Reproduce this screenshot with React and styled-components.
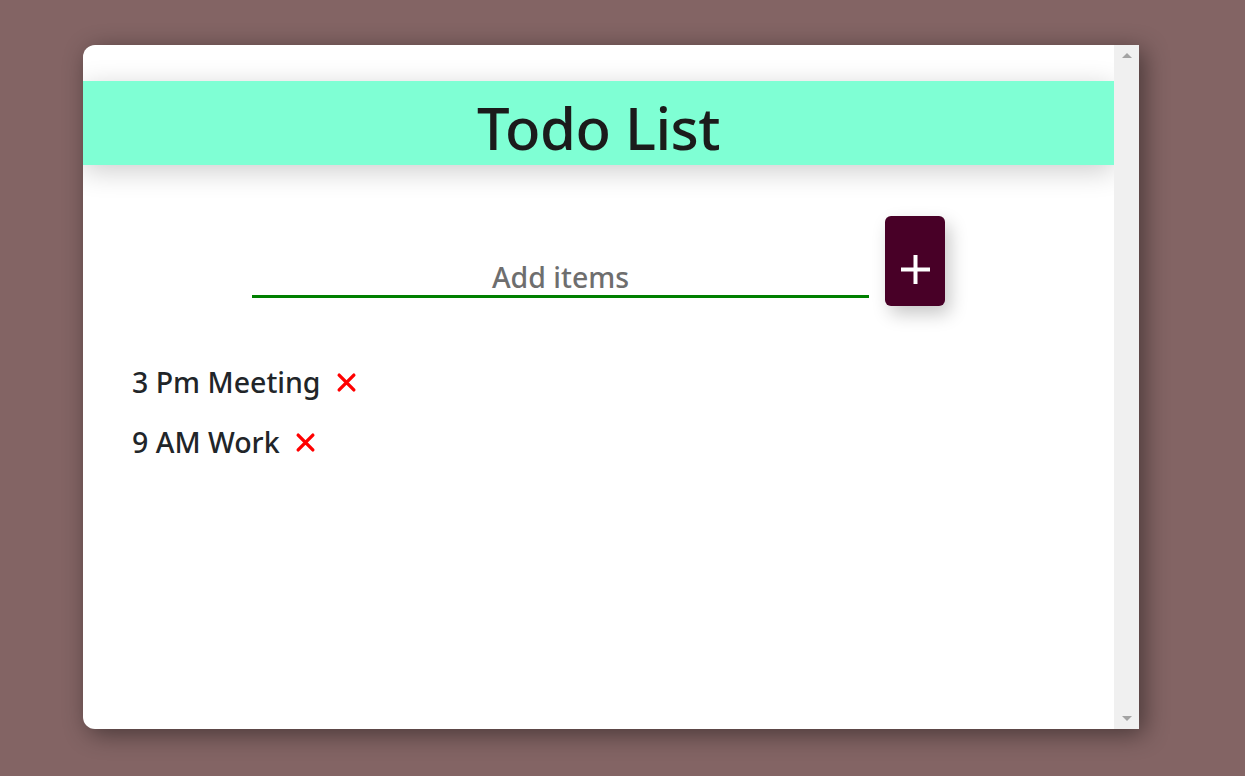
import React, { useState } from "react";
import styled, { createGlobalStyle } from "styled-components";

const Global = createGlobalStyle`
  html, body {
    margin: 0;
    padding: 0;
    background: #836464;
    font-family: "Noto Sans", "Open Sans", sans-serif;
  }
`;

const Page = styled.main`
  min-height: 100vh;
  padding: 45px 0 0 83px;
  box-sizing: border-box;
`;

const Card = styled.section`
  width: 1056px;
  height: 684px;
  display: flex;
  background: #fff;
  border-radius: 12px 0 0 12px;
  box-shadow: 5px 5px 25px rgba(0, 0, 0, 0.45);
  overflow: hidden;
`;

const Content = styled.div`
  flex: 1;
  padding-top: 36px;
`;

const Rail = styled.div`
  width: 25px;
  background: #f0f0f0;
  display: flex;
  flex-direction: column;
  justify-content: space-between;
  align-items: center;
  padding: 8px 0;
  box-sizing: border-box;
`;

const Arrow = styled.span`
  width: 0;
  height: 0;
  border-left: 5px solid transparent;
  border-right: 5px solid transparent;
  ${(p) =>
    p.$up
      ? "border-bottom: 5px solid #a3a3a3;"
      : "border-top: 5px solid #a3a3a3;"}
`;

const Header = styled.header`
  height: 84px;
  box-sizing: border-box;
  padding-top: 8px;
  background: #7fffd4;
  display: flex;
  align-items: center;
  justify-content: center;
  box-shadow: 0 6px 28px rgba(0, 0, 0, 0.2);
`;

const Title = styled.h1`
  margin: 0;
  font-size: 58px;
  font-weight: 500;
  color: #1b1b1b;
  letter-spacing: -0.5px;
`;

const AddRow = styled.form`
  margin-top: 51px;
  display: flex;
  justify-content: center;
  align-items: flex-end;
  gap: 16px;
`;

const Input = styled.input`
  width: 617px;
  height: 44px;
  margin-bottom: 8px;
  border: none;
  border-bottom: 3px solid #008000;
  outline: none;
  text-align: center;
  font-family: inherit;
  font-size: 28.5px;
  color: #212529;
  background: transparent;
  padding: 4px 0 0;
  box-sizing: border-box;
  &::placeholder {
    color: #6e6e6e;
    font-weight: 500;
  }
`;

const AddButton = styled.button`
  width: 60px;
  height: 90px;
  border: none;
  border-radius: 6px;
  background: #480027;
  color: #fff;
  display: flex;
  align-items: center;
  justify-content: center;
  cursor: pointer;
  box-shadow: 5px 8px 18px rgba(0, 0, 0, 0.22);
  padding: 16px 0 0;
`;

const List = styled.ul`
  list-style: none;
  margin: 56px 0 0;
  padding: 0 0 0 49px;
  display: flex;
  flex-direction: column;
  gap: 20px;
`;

const Item = styled.li`
  display: flex;
  align-items: center;
  gap: 15px;
  font-size: 28.5px;
  font-weight: 500;
  color: #212529;
  line-height: 40px;
`;

const Remove = styled.button`
  border: none;
  background: none;
  padding: 0;
  display: flex;
  cursor: pointer;
`;

const Cross = () => (
  <svg width="21" height="21" viewBox="0 0 20 20">
    <path d="M3 3 L17 17 M17 3 L3 17" stroke="#ff0000" strokeWidth="3.2" strokeLinecap="round" />
  </svg>
);

const Plus = () => (
  <svg width="29" height="29" viewBox="0 0 29 29">
    <path d="M14.5 0 V29 M0 14.5 H29" stroke="#fff" strokeWidth="4" />
  </svg>
);

export default function App() {
  const [items, setItems] = useState(["3 Pm Meeting", "9 AM Work"]);
  const [text, setText] = useState("");

  const add = (e) => {
    e.preventDefault();
    if (!text.trim()) return;
    setItems([...items, text]);
    setText("");
  };

  return (
    <Page>
      <Global />
      <Card>
        <Content>
          <Header>
            <Title>Todo List</Title>
          </Header>
          <AddRow onSubmit={add}>
            <Input
              placeholder="Add items"
              value={text}
              onChange={(e) => setText(e.target.value)}
            />
            <AddButton type="submit">
              <Plus />
            </AddButton>
          </AddRow>
          <List>
            {items.map((item, i) => (
              <Item key={i}>
                {item}
                <Remove onClick={() => setItems(items.filter((_, j) => j !== i))}>
                  <Cross />
                </Remove>
              </Item>
            ))}
          </List>
        </Content>
        <Rail>
          <Arrow $up />
          <Arrow />
        </Rail>
      </Card>
    </Page>
  );
}
